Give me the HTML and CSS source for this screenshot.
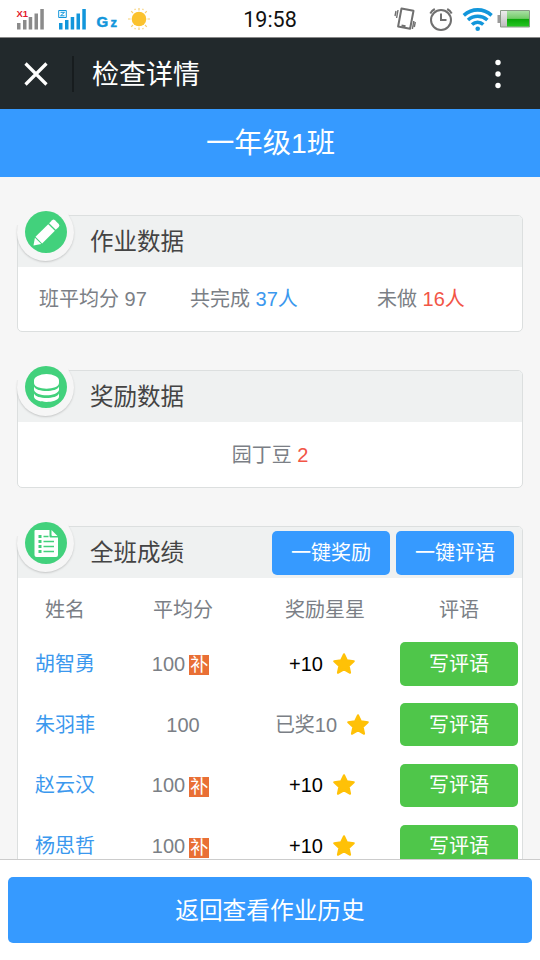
FILE: index.html
```html
<!DOCTYPE html>
<html lang="zh-CN">
<head>
<meta charset="utf-8">
<title>检查详情</title>
<link rel="stylesheet" href="styles.css">
</head>
<body>
<svg class="defs" width="0" height="0">
  <symbol id="star" viewBox="0 0 24 24"><path d="M12 2.200l2.900 6.100 6.900.9-5.100 4.700 1.400 6.900-6.100-3.400-6.100 3.400 1.400-6.900L2.200 9.200l6.900-.9z" fill="#ffc107" stroke="#ffc107" stroke-width="2" stroke-linejoin="round"/></symbol>
</svg>
<div class="screen">
  <div class="status">
    <div class="status-left">
      <svg class="signals" width="127" height="38" viewBox="0 0 127 38">
        <g fill="#8b8b8b"><path d="M17 23h3.500v6.500H17zM23 20h3.500v9.500H23zM28.700 17h3.500v12.500h-3.500zM34.500 13.500H38v16h-3.500zM40.300 9h3.500v20.500h-3.500z"/></g>
        <text x="16.500" y="17" class="sim">X1</text>
        <g fill="#1296db"><path d="M59 23h3.500v6.500H59zM65 20h3.500v9.500H65zM70.700 17h3.500v12.500h-3.500zM76.500 13.500H80v16h-3.500zM82.300 9h3.500v20.500h-3.500z"/></g>
        <path d="M58.700 10.500h7.600v7h-7.600z" fill="#fff" stroke="#1296db"/>
        <path d="M60.500 12.300h4l-4 3.500h4" fill="none" stroke="#1296db"/>
        <text x="96.500" y="26.500" class="net">G</text><text x="110.500" y="26.500" class="net net-small">z</text>
      </svg>
      <svg class="sun" width="24" height="24" viewBox="0 0 24 24"><circle cx="12" cy="12" r="7.300" fill="#fbc22e"/><path d="M12 1v2.500M12 20.500V23M1 12h2.500M20.500 12H23M4.200 4.200L6 6M18 18l1.800 1.800M4.200 19.800L6 18M18 6l1.800-1.800M7.800 1.800l.5 1.200M16.200 1.800l-.5 1.200M7.800 22.200l.5-1.200M16.200 22.200l-.5-1.200" stroke="#f7cf72" stroke-width="1.200"/></svg>
    </div>
    <div class="clock">19:58</div>
    <svg class="status-right" width="146" height="38" viewBox="394 0 146 38">
      <g fill="none" stroke="#707070" stroke-width="2">
        <path d="M401.500 8.500l12 2.300-3.400 18-12-2.300z" stroke-linejoin="round"/>
        <path d="M398 10l-1.400 8M396 11l-1 5M413.800 21l-1.400 8M415.300 22l-1 5" stroke-width="1.400"/>
        <path d="M401.500 25.500l4 .8"/>
        <circle cx="441" cy="20" r="10"/><path d="M441 13.500V20h5.500M430.300 13.500c1-2 2.500-3.400 4.500-4.500M451.700 13.500c-1-2-2.500-3.400-4.500-4.500"/>
      </g>
      <g fill="none" stroke="#1296db" stroke-width="3.600"><path d="M463.800 15.300c8.300-7.300 19.500-7.300 27.800 0M468 20c5.800-5 13.600-5 19.400 0M472 24.500c3.300-2.900 8-2.900 11.300 0"/></g>
      <circle cx="477.700" cy="28.700" r="2.300" fill="#1296db"/>
      <defs>
        <linearGradient id="bat" x2="0" y2="1"><stop offset="0" stop-color="#a9dfa4"/><stop offset=".48" stop-color="#72cc68"/><stop offset=".52" stop-color="#09a609"/><stop offset="1" stop-color="#25c522"/></linearGradient>
        <linearGradient id="cap" x2="0" y2="1"><stop offset="0" stop-color="#eee"/><stop offset="1" stop-color="#bbb"/></linearGradient>
      </defs>
      <path d="M497.500 15h3v8h-3z" fill="#999"/>
      <path d="M500.500 10.500h29v16.500h-29z" fill="url(#cap)" stroke="#8a9a88"/>
      <path d="M507 11h22v15.500h-22z" fill="url(#bat)"/>
    </svg>
  </div>

  <div class="nav">
    <svg class="close" width="24" height="24" viewBox="0 0 24 24"><path d="M1.500 1.500l21 21M22.500 1.500l-21 21" stroke="#fff" stroke-width="3.200"/></svg>
    <span class="nav-line"></span>
    <span class="nav-title">检查详情</span>
    <svg class="more" width="6" height="30" viewBox="0 0 6 30"><g fill="#fff"><circle cx="3" cy="3.500" r="2.700"/><circle cx="3" cy="15" r="2.700"/><circle cx="3" cy="26.500" r="2.700"/></g></svg>
  </div>

  <div class="class-name">一年级1班</div>

  <div class="content">
    <section class="card">
      <div class="card-head">
        <div class="badge"><svg width="42" height="42" viewBox="0 0 42 42"><circle cx="21" cy="21" r="21" fill="#42d17c"/><g transform="translate(8.500 34.500) rotate(-45)" fill="#fff"><path d="M0 0l6.500-4.500v9z"/><path d="M7.500 -4.700h18v9.400h-18z"/><path d="M26.800 -4.700h4.200a2 2 0 0 1 2 2v5.400a2 2 0 0 1-2 2h-4.200z"/></g></svg></div>
        <h2>作业数据</h2>
      </div>
      <div class="stats">
        <span>班平均分 97</span>
        <span>共完成 <b class="blue">37人</b></span>
        <span>未做 <b class="red">16人</b></span>
      </div>
    </section>

    <section class="card">
      <div class="card-head">
        <div class="badge"><svg width="42" height="42" viewBox="0 0 42 42"><circle cx="21" cy="21" r="21" fill="#42d17c"/><g fill="#fff"><ellipse cx="21.500" cy="14.500" rx="12.500" ry="6.500"/><path d="M9 14.500v2.500c0 7.500 25 7.500 25 0v-2.500z"/><path d="M9 20.500c2 6 23 6 25 0v3.500c-2 7-23 7-25 0z"/><path d="M9 27.500c2 6 23 6 25 0v3.500c-2 6.600-23 6.600-25 0z"/></g></svg></div>
        <h2>奖励数据</h2>
      </div>
      <div class="beans">园丁豆 <b class="red">2</b></div>
    </section>

    <section class="card grades">
      <div class="card-head">
        <div class="badge"><svg width="42" height="42" viewBox="0 0 42 42"><circle cx="21" cy="21" r="21" fill="#42d17c"/><path d="M10.500 8h14v6.500a1 1 0 0 0 1 1H33V33a2 2 0 0 1-2 2H11.500a2 2 0 0 1-2-2V9a1 1 0 0 1 1-1z" fill="#fff"/><path d="M26.500 8l6 6h-5a1 1 0 0 1-1-1z" fill="#fff"/><path d="M18.500 14.500h5M18.500 19.500h10.500M18.500 24.500h10.500M18.500 29.500h10.500" stroke="#42d17c" stroke-width="1.600"/><path d="M13.500 14.500h3M13.500 19.500h3M13.500 24.500h3M13.500 29.500h3" stroke="#42d17c" stroke-width="3"/></svg></div>
        <h2>全班成绩</h2>
        <div class="actions"><button class="btn">一键奖励</button><button class="btn">一键评语</button></div>
      </div>
      <div class="row titles"><span>姓名</span><span>平均分</span><span>奖励星星</span><span>评语</span></div>
      <div class="row"><span class="name">胡智勇</span><span class="score">100<i class="makeup">补</i></span><span class="plus">+10<svg class="star"><use href="#star"/></svg></span><button class="btn green">写评语</button></div>
      <div class="row"><span class="name">朱羽菲</span><span>100</span><span class="given">已奖10<svg class="star"><use href="#star"/></svg></span><button class="btn green">写评语</button></div>
      <div class="row"><span class="name">赵云汉</span><span class="score">100<i class="makeup">补</i></span><span class="plus">+10<svg class="star"><use href="#star"/></svg></span><button class="btn green">写评语</button></div>
      <div class="row"><span class="name">杨思哲</span><span class="score">100<i class="makeup">补</i></span><span class="plus">+10<svg class="star"><use href="#star"/></svg></span><button class="btn green">写评语</button></div>
    </section>
  </div>

  <div class="footer"><button class="back">返回查看作业历史</button></div>
</div>
</body>
</html>
```
FILE: styles.css
```css
* { box-sizing: border-box; }
body { margin: 0; background: #f6f6f6; font: 20px/30px "Liberation Sans", "Noto Sans CJK SC", sans-serif; color: #7b7f86; }
button { border: 0; padding: 0; font: inherit; color: #fff; }
b, i { font-weight: normal; font-style: normal; }
.defs { position: absolute; }
.screen { width: 540px; height: 960px; display: flex; flex-direction: column; overflow: hidden; }

.status { height: 38px; flex: none; display: grid; grid-template-columns: 1fr auto 1fr; align-items: center; background: #fff; border-bottom: 1px solid #888; }
.status-left { display: flex; align-items: center; }
.signals, .sun { flex: none; }
.status-right { justify-self: end; }
.sim { font: bold 9.500px "Liberation Sans", sans-serif; fill: #e3182d; }
.net { font: bold 15px "Liberation Sans", sans-serif; fill: #1296db; stroke: #1296db; stroke-width: .5px; }
.net-small { font-size: 13px; }
.clock { font: 21.500px/37px Roboto, sans-serif; color: #111; padding-top: 1px; }

.nav { height: 71px; flex: none; display: flex; align-items: center; padding: 0 39px 0 24px; background: #22292c; }
.nav-line { width: 2px; height: 36px; margin: 0 18px 0 24px; background: #171c1e; }
.nav-title { flex: 1; padding-top: 2px; font-size: 27px; color: #fff; }
.class-name { height: 68px; flex: none; padding-left: 1px; background: #369aff; color: #fff; font-size: 28.300px; line-height: 69px; text-align: center; }

.content { flex: 1; min-height: 0; overflow: hidden; padding: 38px 17px 0; }
.card { height: 117px; margin-bottom: 38px; border: 1px solid #dcdfdf; border-radius: 5px; background: #fff; }
.card-head { position: relative; display: flex; align-items: center; height: 50.500px; padding: 0 8px 0 72px; background: #eff1f1; border-radius: 4px 4px 0 0; }
.card-head::before { content: ""; position: absolute; left: -2px; top: -2px; width: 53px; height: 22px; background: #f6f6f6; }
.card-head h2 { flex: 1; margin: 0; padding-top: 1px; font-size: 23.500px; font-weight: normal; color: #444; }
.badge { position: absolute; left: -1px; top: -12px; width: 57px; height: 57px; padding: 8px 7.500px; border-radius: 50%; background: #f6f6f6; box-shadow: 0 1px 2px #c4c6c6; }
.badge::before { content: ""; position: absolute; left: -3px; top: -3px; width: 54px; height: 24px; background: #f6f6f6; }
.badge svg { position: relative; display: block; top: -1px; }
.stats { display: grid; grid-template-columns: 151px 187px 1fr; padding: 17px 0 0 21px; }
.beans { padding-top: 18px; text-align: center; }
.blue, .name { color: #3b98ee; }
.red { color: #f25546; }

.card + .card { height: 118px; }
.card.grades { height: 500px; }
.actions { display: flex; gap: 6px; padding-top: 2px; }
.btn { width: 118px; height: 44px; border-radius: 5px; background: #369aff; }
.green { height: 43.500px; background: #4fc64a; justify-self: center; }
.row { display: grid; grid-template-columns: 94px 142px 142px 126px; height: 60.800px; align-items: center; }
.row span { display: flex; justify-content: center; align-items: center; }
.titles { height: 56px; padding-top: 9px; }
.makeup { width: 20px; height: 20px; margin: 3px 0 0 4px; background: #e96f35; color: #fff; font-size: 18px; line-height: 20px; text-align: center; }
.plus { color: #000; }
.row .score, .row .plus, .row .given { padding-right: 5px; }
.star { width: 24px; height: 24px; margin-left: 9px; }

.footer { height: 101px; flex: none; background: #fff; border-top: 1px solid #ccc; padding: 17px 8px; }
.back { display: block; width: 100%; height: 66px; padding-top: 1px; border-radius: 5px; background: #369aff; font-size: 23.700px; }
```
